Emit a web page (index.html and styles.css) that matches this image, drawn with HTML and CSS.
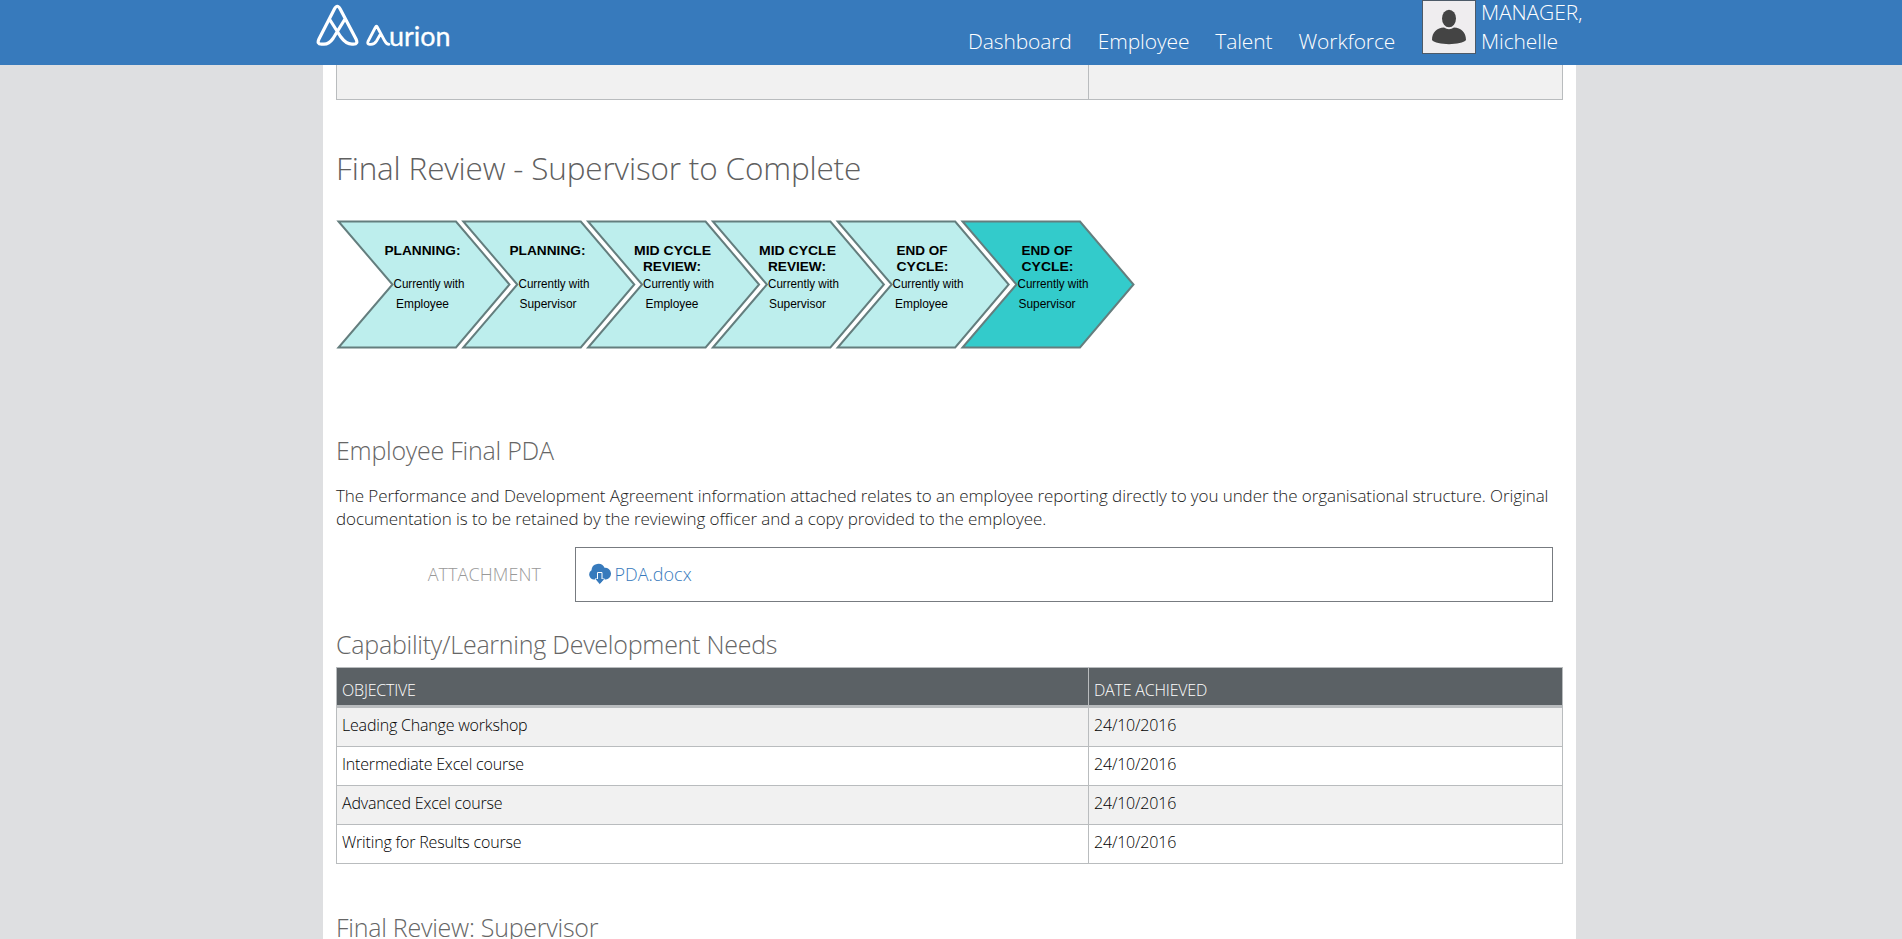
FILE: index.html
```html
<!DOCTYPE html>
<html lang="en">
<head>
<meta charset="utf-8">
<title>Aurion</title>
<link rel="stylesheet" href="styles.css">
</head>
<body>
<header class="topbar">
  <div class="topbar-inner">
    <svg class="logo" width="140" height="52" viewBox="0 0 140 52" role="img" aria-label="Aurion">
      <g fill="none" stroke="#fff" stroke-width="3.2" stroke-linejoin="round" stroke-linecap="round">
        <path d="M14 20 24.500 36.500Q30 44.200 36 44.200H37.500Q42.500 44.200 40 39L24.200 9Q21.300 3.500 18.400 9L3 39Q.5 44.200 5.500 44.200H8Q13 44.200 17 38.500L29 19"/>
        <path stroke-width="2.800" d="M73 44.300Q70.500 44.300 68.500 40.500L61.500 27.500Q60.500 24.800 59.300 27.500L52 41.500Q51 44.300 53.500 44.300H55Q58.500 44.300 60.500 41L64.500 34"/>
      </g>
      <text x="73" y="45.500" class="logo-text" textLength="61.500" lengthAdjust="spacingAndGlyphs">urion</text>
    </svg>
    <nav class="nav">
      <a>Dashboard</a><a>Employee</a><a>Talent</a><a>Workforce</a>
    </nav>
    <div class="user">
      <svg class="avatar" width="54" height="54" viewBox="0 0 54 54">
        <rect x=".5" y=".5" width="53" height="53" fill="#efedef" stroke="#4d5a68"/>
        <ellipse cx="27" cy="18.500" rx="7" ry="8.800" fill="#444"/>
        <path d="M10 40C10 32 15 28 22 27.500Q27 31 32 27.500C39 28 44 32 44 40C40 45.500 14 45.500 10 40Z" fill="#444"/>
      </svg>
      <div class="user-name">MANAGER,<br>Michelle</div>
    </div>
  </div>
</header>
<main class="page">
  <div class="prev-table"><div></div><div></div></div>
  <h1 class="title">Final Review - Supervisor to Complete</h1>
  <svg class="steps" width="800" height="130" viewBox="336 219 800 130">
    <defs><path id="chev" d="M338.500 221.500H456L509.500 284.500 456 347.500H338.500L392.500 284.500Z"/></defs>
    <g class="chevs">
      <use href="#chev"/><use href="#chev" x="124.800"/><use href="#chev" x="249.600"/><use href="#chev" x="374.400"/><use href="#chev" x="499.200"/><use href="#chev" x="624" class="current"/>
    </g>
    <g class="phase">
      <text x="384.500" y="255" textLength="76" lengthAdjust="spacingAndGlyphs">PLANNING:</text>
      <text x="509.500" y="255" textLength="76" lengthAdjust="spacingAndGlyphs">PLANNING:</text>
      <text x="634" y="255" textLength="77" lengthAdjust="spacingAndGlyphs">MID CYCLE</text><text x="643" y="271" textLength="58" lengthAdjust="spacingAndGlyphs">REVIEW:</text>
      <text x="759" y="255" textLength="77" lengthAdjust="spacingAndGlyphs">MID CYCLE</text><text x="768" y="271" textLength="58" lengthAdjust="spacingAndGlyphs">REVIEW:</text>
      <text x="896.500" y="255" textLength="51" lengthAdjust="spacingAndGlyphs">END OF</text><text x="896.500" y="271" textLength="52" lengthAdjust="spacingAndGlyphs">CYCLE:</text>
      <text x="1021.500" y="255" textLength="51" lengthAdjust="spacingAndGlyphs">END OF</text><text x="1021.500" y="271" textLength="52" lengthAdjust="spacingAndGlyphs">CYCLE:</text>
    </g>
    <g class="who">
      <text x="393.500" y="288" textLength="71" lengthAdjust="spacingAndGlyphs">Currently with</text><text x="396" y="307.500" textLength="53" lengthAdjust="spacingAndGlyphs">Employee</text>
      <text x="518.500" y="288" textLength="71" lengthAdjust="spacingAndGlyphs">Currently with</text><text x="519.500" y="307.500" textLength="57" lengthAdjust="spacingAndGlyphs">Supervisor</text>
      <text x="643" y="288" textLength="71" lengthAdjust="spacingAndGlyphs">Currently with</text><text x="645.500" y="307.500" textLength="53" lengthAdjust="spacingAndGlyphs">Employee</text>
      <text x="768" y="288" textLength="71" lengthAdjust="spacingAndGlyphs">Currently with</text><text x="769" y="307.500" textLength="57" lengthAdjust="spacingAndGlyphs">Supervisor</text>
      <text x="892.500" y="288" textLength="71" lengthAdjust="spacingAndGlyphs">Currently with</text><text x="895" y="307.500" textLength="53" lengthAdjust="spacingAndGlyphs">Employee</text>
      <text x="1017.500" y="288" textLength="71" lengthAdjust="spacingAndGlyphs">Currently with</text><text x="1018.500" y="307.500" textLength="57" lengthAdjust="spacingAndGlyphs">Supervisor</text>
    </g>
  </svg>
  <h2 class="sub sub-pda">Employee Final PDA</h2>
  <p class="intro">The Performance and Development Agreement information attached relates to an employee reporting directly to you under the organisational structure. Original<br>documentation is to be retained by the reviewing officer and a copy provided to the employee.</p>
  <div class="field">
    <span class="field-label">ATTACHMENT</span>
    <div class="field-box">
      <svg class="cloud" width="22" height="22" viewBox="0 0 22 22">
        <path fill="#377abc" d="M5 16.500A5 5 0 0 1 2.500 7.300 6.800 6.800 0 0 1 15.500 4.800 5.900 5.900 0 0 1 17 16.500Z"/>
        <path fill="#377abc" stroke="#fff" stroke-width="1" d="M8.500 9.500H13V16H15.500L10.800 21.300 6 16H8.500Z"/>
        <path fill="#377abc" d="M6.500 16H15L10.800 21Z"/>
      </svg>
      <a class="file">PDA.docx</a>
    </div>
  </div>
  <h2 class="sub sub-cap">Capability/Learning Development Needs</h2>
  <table class="grid">
    <thead><tr><th class="c1">OBJECTIVE</th><th>DATE ACHIEVED</th></tr></thead>
    <tbody>
      <tr><td>Leading Change workshop</td><td>24/10/2016</td></tr>
      <tr><td>Intermediate Excel course</td><td>24/10/2016</td></tr>
      <tr><td>Advanced Excel course</td><td>24/10/2016</td></tr>
      <tr><td>Writing for Results course</td><td>24/10/2016</td></tr>
    </tbody>
  </table>
  <h2 class="sub sub-final">Final Review: Supervisor</h2>
</main>
</body>
</html>
```
FILE: styles.css
```css
* { box-sizing: border-box; }
html, body { margin: 0; height: 939px; overflow: hidden; }
body { background: #dedfe1; font-family: "Open Sans", sans-serif; font-weight: 300; color: #222; }
.topbar { height: 65px; background: #377abc; }
.topbar-inner { display: flex; width: 1270px; margin-left: 316px; height: 65px; }
.logo { flex: none; }
.logo-text { font: 400 27px Lato, sans-serif; fill: #fff; stroke: #fff; stroke-width: .3; }
.nav { display: flex; gap: 26px; margin-left: 512px; padding-top: 26px; font-size: 21px; line-height: 30px; letter-spacing: -.11px; color: #fff; }
.nav a { white-space: nowrap; }
.user { display: flex; margin-left: auto; width: 164px; }
.avatar { flex: none; }
.user-name { margin-left: 5px; margin-top: -2px; font-size: 21px; line-height: 29px; letter-spacing: -.1px; color: #fff; white-space: nowrap; }
.page { width: 1253px; height: 874px; margin-left: 323px; padding: 0 13px; background: #fff; overflow: hidden; }
.prev-table { display: flex; width: 1227px; height: 35px; border: 1px solid #b9bcbe; border-top: 0; background: #f1f1f1; }
.prev-table div:first-child { width: 752px; border-right: 1px solid #b9bcbe; }
h1, h2, p { margin: 0; font-weight: 300; white-space: nowrap; }
.title { margin-top: 46px; height: 73px; font-size: 31.5px; line-height: 44px; letter-spacing: -.16px; color: #606060; }
.steps { display: block; }
.chevs { fill: #bdeeed; stroke: #647e7e; stroke-width: 2; }
.current { fill: #33cbcb; }
.phase { font: 700 13.5px "Liberation Sans", Arial, sans-serif; fill: #000; }
.who { font: 400 13px "Liberation Sans", Arial, sans-serif; fill: #000; }
.sub { font-size: 25px; line-height: 36px; height: 36px; letter-spacing: -.25px; color: #666; }
.sub-pda { margin-top: 83px; }
.intro { margin-top: 16px; font-size: 17px; line-height: 23px; letter-spacing: -.09px; }
.field { display: flex; margin-top: 17px; height: 55px; }
.field-label { width: 205px; margin-right: 34px; text-align: right; font-size: 18px; line-height: 55px; letter-spacing: .08px; color: #999; }
.field-box { display: flex; align-items: center; width: 978px; border: 1px solid #777b80; padding: 0 0 1px 13px; }
.file { margin-left: 3.5px; font-size: 18px; color: #377abc; }
.sub-cap { margin-top: 24px; }
.grid { width: 1227px; margin-top: 5px; border-collapse: collapse; table-layout: fixed; font-size: 16px; line-height: 22px; letter-spacing: -.19px; color: #000; }
.grid th, .grid td { border: 1px solid #b9bcbe; padding: 0 5px; text-align: left; font-weight: 300; white-space: nowrap; }
.grid th { height: 39px; padding-top: 6px; background: #5b6165; color: #fff; border-bottom: 3px solid #b9bcbe; }
.grid td { height: 39px; padding-bottom: 5px; }
.grid tbody tr:first-child td { height: 40px; padding-bottom: 4px; }
.grid tbody tr:nth-child(odd) { background: #f1f1f1; }
.c1 { width: 752px; }
.sub-final { margin-top: 45px; }
```
